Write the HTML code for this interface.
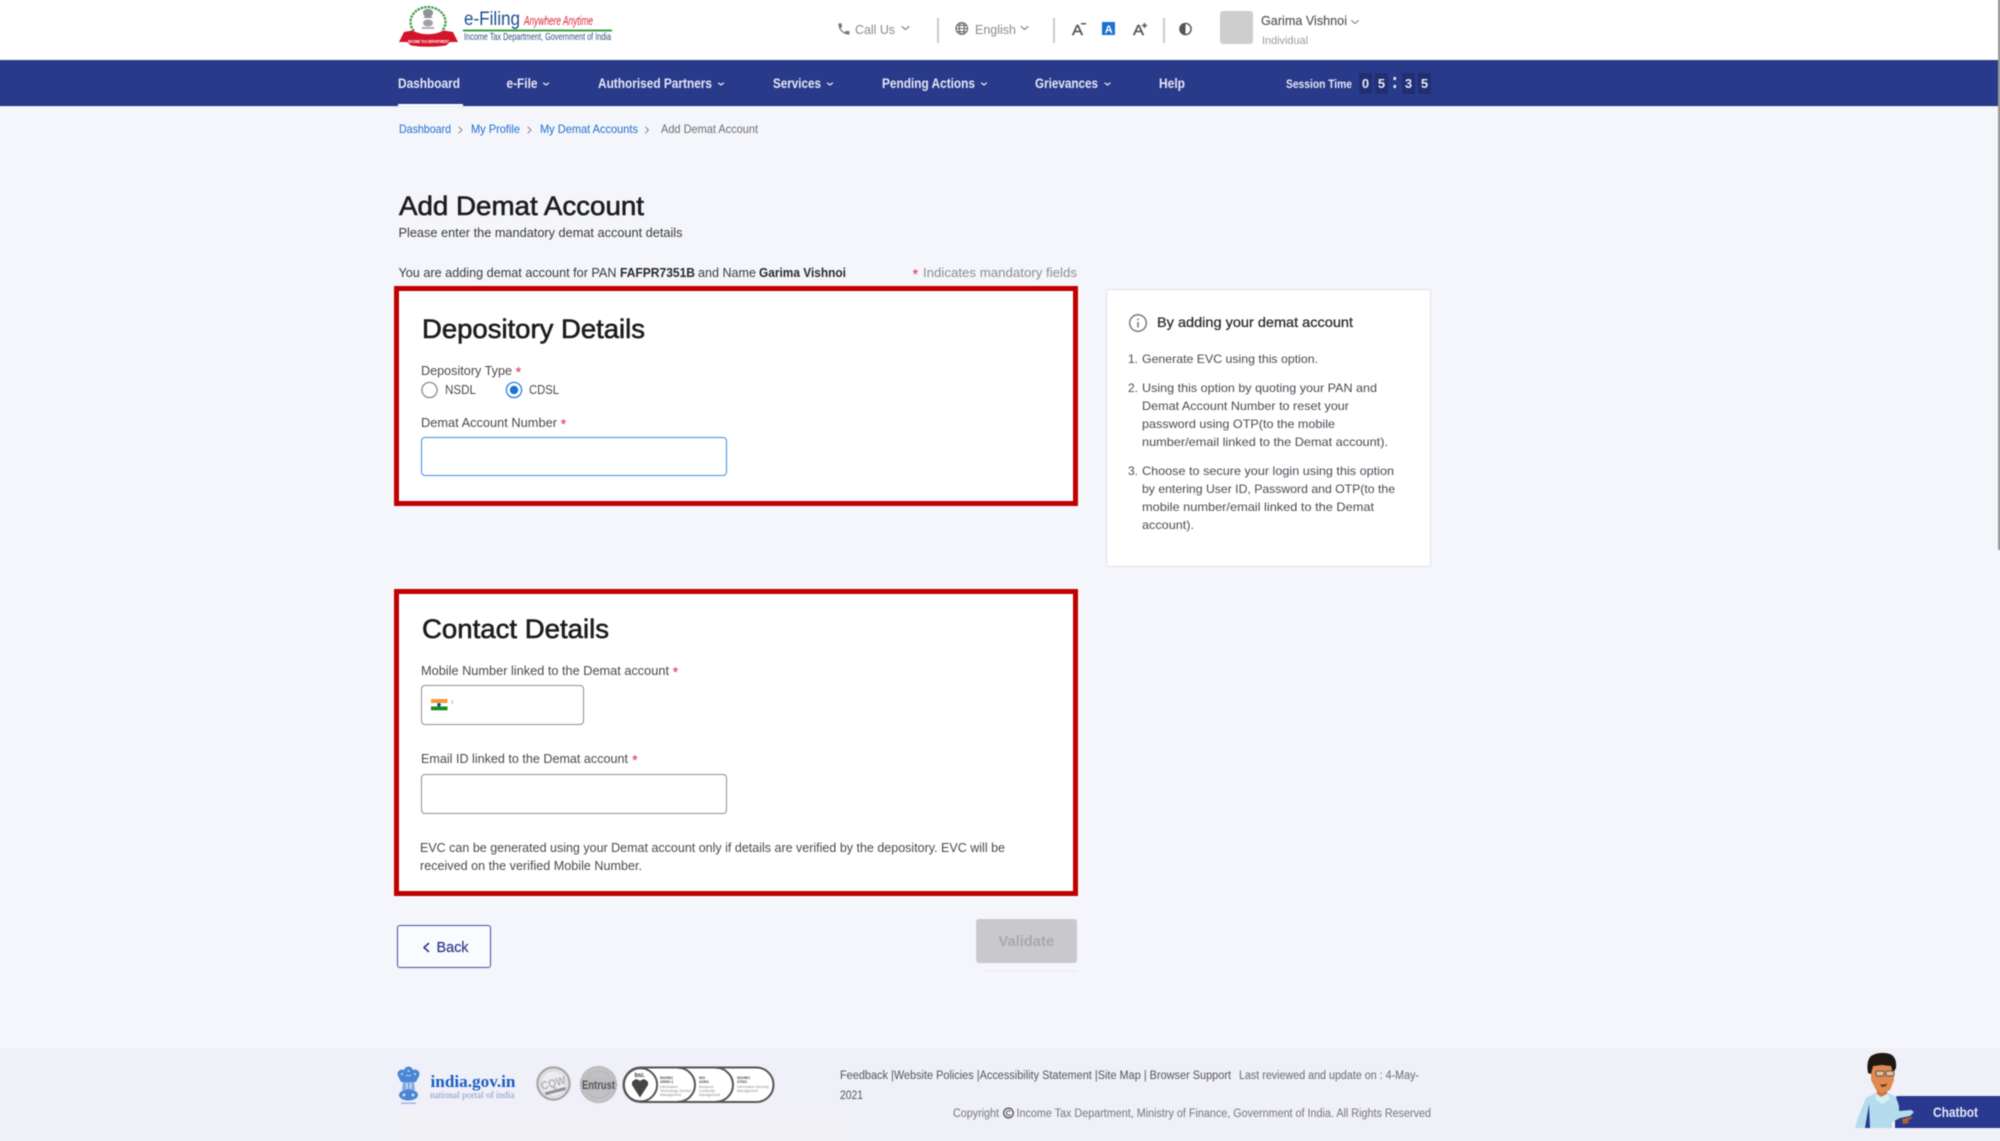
<!DOCTYPE html>
<html lang="en">
<head>
<meta charset="utf-8">
<title>Add Demat Account</title>
<style>
html,body{margin:0;padding:0;width:2000px;height:1141px;overflow:hidden;background:#f5f6fb}
#w{position:relative;width:2000px;height:1141px;filter:blur(.4px);font-family:"Liberation Sans",sans-serif}
#w>div{position:absolute;box-sizing:border-box}
svg{position:absolute;left:0;top:0}
svg text{font-family:"Liberation Sans",sans-serif}
.n{font-size:13.500px;font-weight:700;fill:#e6e8f6}
.l{font-size:13px;fill:#4a4a4a}
.s{fill:#d9304f;font-size:15px}
.h{font-size:27px;fill:#1c1c1c;stroke:#1c1c1c;stroke-width:.6}
.li{font-size:12px;fill:#4a4a55}
.f{font-size:11.500px;fill:#555}
.d{font-size:13px;font-weight:700;fill:#e8eaf8;text-anchor:middle}
.c{fill:none;stroke-linecap:round;stroke-linejoin:round}
</style>
</head>
<body>
<div id="w">
  <div style="left:-20px;top:-20px;width:2040px;height:80px;background:#fff"></div>
  <div style="left:-20px;top:60px;width:2040px;height:46px;background:#2a3a8b;border-bottom:1px solid #23318a"></div>
  <div style="left:-20px;top:106px;width:2040px;height:1px;background:#e6e7f2"></div>
  <div style="left:398px;top:104px;width:65px;height:2px;background:#fff"></div>
  <div style="left:1998px;top:-20px;width:22px;height:570px;background:#9a9a9a"></div>

  <div style="left:937px;top:18px;width:2px;height:25px;background:#ccc"></div>
  <div style="left:1053px;top:18px;width:2px;height:25px;background:#ccc"></div>
  <div style="left:1163px;top:18px;width:2px;height:25px;background:#ccc"></div>
  <div style="left:1220px;top:11px;width:33px;height:33px;background:#cecece;border-radius:3px"></div>
  <div style="left:1102px;top:22px;width:13px;height:13px;background:#1a73d4"></div>

  <div style="left:1359px;top:73px;width:13px;height:21px;background:#212e72"></div>
  <div style="left:1375px;top:73px;width:13px;height:21px;background:#212e72"></div>
  <div style="left:1402px;top:73px;width:13px;height:21px;background:#212e72"></div>
  <div style="left:1418px;top:73px;width:13px;height:21px;background:#212e72"></div>

  <div style="left:394px;top:286px;width:684px;height:220px;background:#fff;border:5px solid #c00000"></div>
  <div style="left:394px;top:589px;width:684px;height:307px;background:#fff;border:5px solid #c00000"></div>
  <div style="left:1106px;top:289px;width:325px;height:278px;background:#fff;border:1px solid #dfe1ee;border-radius:3px"></div>

  <div style="left:421px;top:437px;width:306px;height:39px;background:#fff;border:1.500px solid #3f8ce0;border-radius:4px"></div>
  <div style="left:421px;top:685px;width:163px;height:40px;background:#fff;border:1px solid #8f8f8f;border-radius:4px"></div>
  <div style="left:421px;top:774px;width:306px;height:40px;background:#fff;border:1px solid #8f8f8f;border-radius:4px"></div>

  <div style="left:397px;top:925px;width:94px;height:43px;background:#fafbfe;border:1.500px solid #3d4c9d;border-radius:3px"></div>
  <div style="left:976px;top:919px;width:101px;height:44px;background:#c9c9cd;border-radius:3px"></div>
  <div style="left:984px;top:970px;width:93px;height:2px;background:#eeeff5"></div>

  <div style="left:-20px;top:1048px;width:2040px;height:113px;background:#eff0f8"></div>
  <div style="left:400px;top:1110px;width:445px;height:51px;background:#f1f1f5"></div>
  <div style="left:1895px;top:1096px;width:125px;height:32px;background:#28398f;border-radius:3px 0 0 0"></div>

  <svg width="2000" height="1141" viewBox="0 0 2000 1141" xmlns="http://www.w3.org/2000/svg">
    <!-- logo -->
    <path d="M414 31 A17.500 15 0 1 1 442 31" fill="#fff" stroke="#4a9e55" stroke-width="2.400" stroke-dasharray="2.500 1"/>
    <path d="M428 9c-3 0-5 1.500-5 3.500 0 2 1 3 2 4l-2 1.500h10l-2-1.500c1-1 2-2 2-4 0-2-2-3.500-5-3.500z" fill="#8f9398"/>
    <ellipse cx="428" cy="23" rx="5" ry="3.500" fill="#9ea2a7"/>
    <rect x="422" y="27" width="12" height="2" fill="#b0b3b8"/>
    <path d="M399 42 L404 32 L412 30.500 Q428 38 444 30.500 L453 32 L458 42 L450 42 L446 45.500 Q428 48 411 45.500 L407 42Z" fill="#d3152b"/>
    <text x="408" y="43" font-size="4.800" font-weight="700" fill="#fff" textLength="41" lengthAdjust="spacingAndGlyphs">INCOME TAX DEPARTMENT</text>
    <text x="464" y="25" font-size="19" fill="#1e4f8f" textLength="56" lengthAdjust="spacingAndGlyphs">e-Filing</text>
    <text x="524" y="25" font-size="12.500" font-style="italic" fill="#d8263c" textLength="69" lengthAdjust="spacingAndGlyphs">Anywhere Anytime</text>
    <rect x="463" y="29.500" width="149" height="2" fill="#3d9e45"/>
    <text x="464" y="40" font-size="10.500" fill="#28507f" textLength="147" lengthAdjust="spacingAndGlyphs">Income Tax Department, Government of India</text>

    <!-- top tools -->
    <g transform="translate(836.500 21.500) scale(.62)"><path fill="#777" d="M6.620 10.790c1.440 2.830 3.760 5.140 6.590 6.590l2.200-2.200c.270-.270.670-.360 1.020-.240 1.120.370 2.330.570 3.570.570.550 0 1 .450 1 1V20c0 .550-.450 1-1 1-9.390 0-17-7.610-17-17 0-.550.450-1 1-1h3.500c.550 0 1 .450 1 1 0 1.250.200 2.450.570 3.570.110.350.030.740-.250 1.020l-2.200 2.200z"/></g>
    <text x="855" y="34" font-size="13" fill="#8a8a8a" textLength="40" lengthAdjust="spacingAndGlyphs">Call Us</text>
    <polyline class="c" points="902,26.500 905.500,29.500 909,26.500" stroke="#888" stroke-width="1.200"/>
    <g fill="none" stroke="#666" stroke-width="1.100"><circle cx="961.800" cy="28.500" r="5.800"/><ellipse cx="961.800" cy="28.500" rx="2.600" ry="5.800"/><path d="M956 28.500h11.600M956.900 25.500h9.800M956.900 31.500h9.800"/></g>
    <text x="975" y="34" font-size="13" fill="#8a8a8a" textLength="41" lengthAdjust="spacingAndGlyphs">English</text>
    <polyline class="c" points="1021,26.500 1024.500,29.500 1028,26.500" stroke="#888" stroke-width="1.200"/>

    <text x="1072" y="35" font-size="15" fill="#555" stroke="#555" stroke-width=".4" textLength="11" lengthAdjust="spacingAndGlyphs">A</text>
    <rect x="1081" y="23" width="5" height="1.500" fill="#555"/>
    <text x="1104.800" y="33" font-size="11" fill="#fff" font-weight="700">A</text>
    <text x="1133" y="35" font-size="15" fill="#555" stroke="#555" stroke-width=".4" textLength="11" lengthAdjust="spacingAndGlyphs">A</text>
    <path d="M1144.500 23v5M1142 25.500h5" stroke="#555" stroke-width="1.500"/>
    <circle cx="1185.500" cy="29" r="5.600" fill="#fff" stroke="#555" stroke-width="1.400"/>
    <path d="M1185.500 23.400a5.600 5.600 0 0 0 0 11.200z" fill="#555"/>

    <text x="1261" y="25" font-size="13" fill="#555" stroke="#555" stroke-width=".15" textLength="86" lengthAdjust="spacingAndGlyphs">Garima Vishnoi</text>
    <polyline class="c" points="1351.500,20.500 1355,23.500 1358.500,20.500" stroke="#777" stroke-width="1"/>
    <text x="1262" y="44" font-size="11" fill="#9a9a9a" textLength="46" lengthAdjust="spacingAndGlyphs">Individual</text>

    <!-- nav -->
    <text class="n" x="398" y="88" textLength="62" lengthAdjust="spacingAndGlyphs">Dashboard</text>
    <text class="n" x="506.500" y="88" textLength="31" lengthAdjust="spacingAndGlyphs">e-File</text>
    <polyline class="c" points="543.500,83 546,85 548.500,83" stroke="#e6e8f6" stroke-width="1.200"/>
    <text class="n" x="598" y="88" textLength="114" lengthAdjust="spacingAndGlyphs">Authorised Partners</text>
    <polyline class="c" points="718.500,83 721,85 723.500,83" stroke="#e6e8f6" stroke-width="1.200"/>
    <text class="n" x="773" y="88" textLength="48" lengthAdjust="spacingAndGlyphs">Services</text>
    <polyline class="c" points="827.500,83 830,85 832.500,83" stroke="#e6e8f6" stroke-width="1.200"/>
    <text class="n" x="882" y="88" textLength="93" lengthAdjust="spacingAndGlyphs">Pending Actions</text>
    <polyline class="c" points="981.500,83 984,85 986.500,83" stroke="#e6e8f6" stroke-width="1.200"/>
    <text class="n" x="1035" y="88" textLength="63" lengthAdjust="spacingAndGlyphs">Grievances</text>
    <polyline class="c" points="1105,83 1107.500,85 1110,83" stroke="#e6e8f6" stroke-width="1.200"/>
    <text class="n" x="1159" y="88" textLength="26" lengthAdjust="spacingAndGlyphs">Help</text>
    <text x="1286" y="88" font-size="12" font-weight="700" fill="#e6e8f6" textLength="66" lengthAdjust="spacingAndGlyphs">Session Time</text>
    <text class="d" x="1365.500" y="88">0</text>
    <text class="d" x="1381.500" y="88">5</text>
    <rect x="1393.500" y="77" width="2.500" height="3" fill="#e8eaf8"/>
    <rect x="1393.500" y="85" width="2.500" height="3" fill="#e8eaf8"/>
    <text class="d" x="1408.500" y="88">3</text>
    <text class="d" x="1424.500" y="88">5</text>

    <!-- breadcrumb -->
    <g font-size="12" fill="#1c6fd0">
      <text x="399" y="133" textLength="52" lengthAdjust="spacingAndGlyphs">Dashboard</text>
      <text x="471" y="133" textLength="49" lengthAdjust="spacingAndGlyphs">My Profile</text>
      <text x="540" y="133" textLength="98" lengthAdjust="spacingAndGlyphs">My Demat Accounts</text>
    </g>
    <text x="661" y="133" font-size="12" fill="#6d6d6d" textLength="97" lengthAdjust="spacingAndGlyphs">Add Demat Account</text>
    <g class="c" stroke="#888" stroke-width="1"><polyline points="459,127 462,130 459,133"/><polyline points="528,127 531,130 528,133"/><polyline points="645.500,127 648.500,130 645.500,133"/></g>

    <!-- title -->
    <text class="h" x="399" y="215" textLength="245" lengthAdjust="spacingAndGlyphs">Add Demat Account</text>
    <text x="398.500" y="237" font-size="13" fill="#3a3a3a" textLength="284" lengthAdjust="spacingAndGlyphs">Please enter the mandatory demat account details</text>
    <text x="398.500" y="277" font-size="13" fill="#3a3a3a" textLength="218" lengthAdjust="spacingAndGlyphs">You are adding demat account for PAN</text>
    <text x="620" y="277" font-size="13" font-weight="700" fill="#2a2a2a" textLength="75" lengthAdjust="spacingAndGlyphs">FAFPR7351B</text>
    <text x="698" y="277" font-size="13" fill="#3a3a3a" textLength="58" lengthAdjust="spacingAndGlyphs">and Name</text>
    <text x="759" y="277" font-size="13" font-weight="700" fill="#2a2a2a" textLength="87" lengthAdjust="spacingAndGlyphs">Garima Vishnoi</text>
    <text class="s" x="912.500" y="279">*</text>
    <text x="923" y="277" font-size="13" fill="#8d8d8d" textLength="154" lengthAdjust="spacingAndGlyphs">Indicates mandatory fields</text>

    <!-- depository -->
    <text class="h" x="422" y="338" textLength="223" lengthAdjust="spacingAndGlyphs">Depository Details</text>
    <text class="l" x="421" y="375" textLength="91" lengthAdjust="spacingAndGlyphs">Depository Type</text>
    <text class="s" x="515.500" y="377">*</text>
    <circle cx="429.500" cy="390" r="7.600" fill="#fff" stroke="#8a8a8a" stroke-width="1.300"/>
    <text class="l" x="445" y="394" textLength="31" lengthAdjust="spacingAndGlyphs">NSDL</text>
    <circle cx="514" cy="390" r="7.600" fill="#fff" stroke="#2a82dd" stroke-width="1.300"/>
    <circle cx="514" cy="390" r="4.200" fill="#1a73d4"/>
    <text class="l" x="529" y="394" textLength="30" lengthAdjust="spacingAndGlyphs">CDSL</text>
    <text class="l" x="421" y="427" textLength="136" lengthAdjust="spacingAndGlyphs">Demat Account Number</text>
    <text class="s" x="560.500" y="429">*</text>

    <!-- contact -->
    <text class="h" x="422" y="638" textLength="187" lengthAdjust="spacingAndGlyphs">Contact Details</text>
    <text class="l" x="421" y="675" textLength="248" lengthAdjust="spacingAndGlyphs">Mobile Number linked to the Demat account</text>
    <text class="s" x="672.500" y="677">*</text>
    <rect x="431" y="699" width="16.500" height="4" fill="#f5973a"/>
    <rect x="431" y="703" width="16.500" height="3.500" fill="#fff"/>
    <rect x="431" y="706.500" width="16.500" height="3.800" fill="#1a8a1a"/>
    <circle cx="439" cy="704.800" r="1.800" fill="#1d3d8f"/>
    <rect x="451.800" y="700" width="1" height="4" fill="#e8b070"/>
    <text class="l" x="421" y="763" textLength="207" lengthAdjust="spacingAndGlyphs">Email ID linked to the Demat account</text>
    <text class="s" x="632" y="765">*</text>
    <text class="l" x="420" y="852" textLength="585" lengthAdjust="spacingAndGlyphs">EVC can be generated using your Demat account only if details are verified by the depository. EVC will be</text>
    <text class="l" x="420" y="870" textLength="222" lengthAdjust="spacingAndGlyphs">received on the verified Mobile Number.</text>

    <!-- side panel -->
    <circle cx="1138" cy="323" r="8.300" fill="#fff" stroke="#7a7a7a" stroke-width="1.500"/>
    <rect x="1137.200" y="322" width="1.600" height="5.500" fill="#7a7a7a"/>
    <rect x="1137.200" y="318.500" width="1.600" height="1.700" fill="#7a7a7a"/>
    <text x="1157" y="327" font-size="14" fill="#2a2a2a" stroke="#2a2a2a" stroke-width=".25" textLength="196" lengthAdjust="spacingAndGlyphs">By adding your demat account</text>
    <text class="li" x="1128" y="363">1.</text>
    <text class="li" x="1142" y="363" textLength="176" lengthAdjust="spacingAndGlyphs">Generate EVC using this option.</text>
    <text class="li" x="1128" y="392">2.</text>
    <text class="li" x="1142" y="392" textLength="235" lengthAdjust="spacingAndGlyphs">Using this option by quoting your PAN and</text>
    <text class="li" x="1142" y="410" textLength="207" lengthAdjust="spacingAndGlyphs">Demat Account Number to reset your</text>
    <text class="li" x="1142" y="428" textLength="193" lengthAdjust="spacingAndGlyphs">password using OTP(to the mobile</text>
    <text class="li" x="1142" y="446" textLength="246" lengthAdjust="spacingAndGlyphs">number/email linked to the Demat account).</text>
    <text class="li" x="1128" y="475">3.</text>
    <text class="li" x="1142" y="475" textLength="252" lengthAdjust="spacingAndGlyphs">Choose to secure your login using this option</text>
    <text class="li" x="1142" y="493" textLength="253" lengthAdjust="spacingAndGlyphs">by entering User ID, Password and OTP(to the</text>
    <text class="li" x="1142" y="511" textLength="232" lengthAdjust="spacingAndGlyphs">mobile number/email linked to the Demat</text>
    <text class="li" x="1142" y="529" textLength="52" lengthAdjust="spacingAndGlyphs">account).</text>

    <!-- buttons -->
    <polyline class="c" points="428.500,943.500 424,947.500 428.500,951.500" stroke="#2a3a8b" stroke-width="1.600"/>
    <text x="436.500" y="952" font-size="14.500" fill="#2a3a8b" stroke="#2a3a8b" stroke-width=".2" textLength="32" lengthAdjust="spacingAndGlyphs">Back</text>
    <text x="998.500" y="946" font-size="14.500" font-weight="700" fill="#a9a9ad" textLength="55.500" lengthAdjust="spacingAndGlyphs">Validate</text>

    <!-- footer: emblem -->
    <g fill="#4a86d4">
      <circle cx="408.500" cy="1071" r="4.500"/><circle cx="402" cy="1074" r="4.500"/><circle cx="415" cy="1074" r="4.500"/>
      <path d="M398 1076h21l-3 6h-15z"/>
      <path d="M403 1082h11l1 8h-13z" fill="#82aae2"/>
      <ellipse cx="408.500" cy="1095" rx="9.500" ry="5.500"/>
      <rect x="401" y="1102.500" width="15" height="1.500" fill="#9ab8e2"/>
      <g fill="#cfe0f5"><circle cx="402" cy="1074" r="1"/><circle cx="408.500" cy="1071" r="1"/><circle cx="415" cy="1074" r="1"/><circle cx="404" cy="1095" r="1.500"/><circle cx="413" cy="1095" r="1.500"/><rect x="406" y="1083" width="1.500" height="6"/><rect x="410" y="1083" width="1.500" height="6"/></g>
    </g>
    <text x="430.500" y="1087" font-size="17" font-weight="700" fill="#1b5ec0" textLength="85" lengthAdjust="spacingAndGlyphs" style="font-family:'Liberation Serif',serif">india.gov.in</text>
    <text x="430" y="1098" font-size="9.500" fill="#8096bd" textLength="84.500" lengthAdjust="spacingAndGlyphs" style="font-family:'Liberation Serif',serif">national portal of india</text>

    <!-- certifications -->
    <circle cx="553.500" cy="1083.500" r="16" fill="#ececf1" stroke="#a8a8a8" stroke-width="2.400"/>
    <circle cx="553.500" cy="1083.500" r="13" fill="none" stroke="#cfcfd2" stroke-width="1"/>
    <text x="541" y="1087" font-size="11.500" fill="#b0b0b4" font-weight="700" transform="rotate(-15 553 1084)" textLength="25" lengthAdjust="spacingAndGlyphs">CQW</text>
    <rect x="543" y="1090" width="21" height="3" fill="#8f8f8f" transform="rotate(-15 553 1084)"/>
    <circle cx="598.500" cy="1084.500" r="18" fill="#c2c2c5" stroke="#b0b0b3" stroke-width="1.500" stroke-dasharray="2 1"/>
    <circle cx="598.500" cy="1084.500" r="13.500" fill="none" stroke="#a5a5a8" stroke-width="1" stroke-dasharray="1 1"/>
    <rect x="581.500" y="1077" width="34" height="14" fill="#bdbdc0"/>
    <text x="582" y="1089" font-size="12" font-weight="700" fill="#55555a" textLength="33" lengthAdjust="spacingAndGlyphs">Entrust</text>
    <rect x="623.500" y="1067.500" width="150" height="34.500" rx="17.250" fill="#fff" stroke="#555" stroke-width="2"/>
    <path d="M716 1067.800a17 17 0 0 1 0 34" fill="#fff" stroke="#555" stroke-width="2"/>
    <path d="M678 1067.800a17 17 0 0 1 0 34" fill="#fff" stroke="#555" stroke-width="2"/>
    <circle cx="640.500" cy="1084.800" r="16.600" fill="#fff" stroke="#555" stroke-width="2"/>
    <text x="634.500" y="1077" font-size="6" font-weight="700" fill="#334">bsi.</text>
    <path d="M632 1082q4-5 8-1 4-4 8 1v3l-8 12.500-8-12.500z" fill="#444"/>
    <g font-size="3.600" fill="#888">
      <text x="660" y="1079" fill="#444" font-weight="700">ISO/IEC</text><text x="660" y="1083" fill="#444" font-weight="700">20000-1</text><text x="660" y="1088">Information</text><text x="660" y="1092">Technology Service</text><text x="660" y="1096">Management</text>
      <text x="699" y="1079" fill="#444" font-weight="700">ISO</text><text x="699" y="1083" fill="#444" font-weight="700">22301</text><text x="699" y="1088">Business</text><text x="699" y="1092">Continuity</text><text x="699" y="1096">Management</text>
      <text x="737" y="1079" fill="#444" font-weight="700">ISO/IEC</text><text x="737" y="1083" fill="#444" font-weight="700">27001</text><text x="737" y="1088">Information Security</text><text x="737" y="1092">Management</text>
    </g>

    <!-- footer text -->
    <text class="f" x="840" y="1079" textLength="391" lengthAdjust="spacingAndGlyphs">Feedback |Website Policies |Accessibility Statement |Site Map | Browser Support</text>
    <text class="f" x="1239" y="1079" style="fill:#6a6a6a" textLength="180" lengthAdjust="spacingAndGlyphs">Last reviewed and update on : 4-May-</text>
    <text class="f" x="840" y="1099" textLength="23" lengthAdjust="spacingAndGlyphs">2021</text>
    <text x="953" y="1117" font-size="11.500" fill="#777" textLength="46" lengthAdjust="spacingAndGlyphs">Copyright</text>
    <circle cx="1008.500" cy="1113" r="4.800" fill="none" stroke="#555" stroke-width="1.300"/>
    <path d="M1010.500 1111.500a2.300 2.300 0 1 0 0 3" fill="none" stroke="#555" stroke-width="1"/>
    <text x="1016.500" y="1117" font-size="11.500" fill="#777" textLength="414.500" lengthAdjust="spacingAndGlyphs">Income Tax Department, Ministry of Finance, Government of India. All Rights Reserved</text>

    <!-- chatbot man -->
    <path d="M1855 1128q2-8 6-18l5-12 10-5h12l8 4 3 9v5l12-1 3 2-4 4-10 2-8 4v6z" fill="#b4dcec"/>
    <path d="M1865 1128l4-24 1 24z" fill="#28398f"/>
    <path d="M1876 1094h12l2 5-8 5-7-5z" fill="#d8eef6"/>
    <path d="M1902 1119l9-2 2 1-5 2 1 3-6 1z" fill="#b4622f"/>
    <path d="M1876 1082l1 12 4 3 6-3 1-8z" fill="#cf7a45"/>
    <path d="M1871 1065l22-1 1 16-4 10-8 3-6-3-5-10z" fill="#e08a50"/>
    <path d="M1868 1073q-2-12 3-17 8-5 19-2 7 3 6 14l-3 5-2-7-9-1-9 1-2 8z" fill="#1e1714"/>
    <g fill="#f4e4d8" fill-opacity=".55" stroke="#555" stroke-width="1"><rect x="1876" y="1071" width="8" height="5" rx="1.500"/><rect x="1886" y="1071" width="8" height="5" rx="1.500"/></g>
    <path d="M1880 1084q4 2 7-1l-1 3-4 1z" fill="#5a2a18"/>
    <text x="1933" y="1117" font-size="13.500" font-weight="700" fill="#e6e8f6" textLength="45" lengthAdjust="spacingAndGlyphs">Chatbot</text>
  </svg>
</div>
</body>
</html>
